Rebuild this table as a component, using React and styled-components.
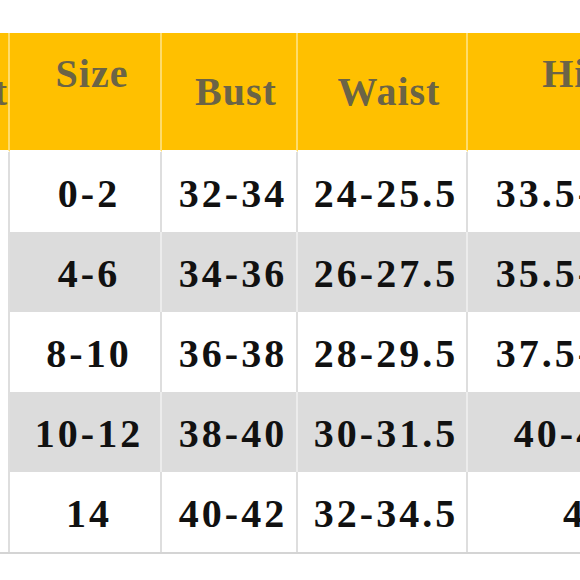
import React from "react";
import styled, { createGlobalStyle } from "styled-components";

const Global = createGlobalStyle`
  html, body { margin: 0; padding: 0; background: #ffffff; }
  body { font-family: "Liberation Serif", "Times New Roman", serif; }
`;

const Viewport = styled.div`
  width: 580px;
  height: 580px;
  overflow: hidden;
  padding-top: 33px;
  box-sizing: border-box;
  background: #ffffff;
`;

const Grid = styled.div`
  display: grid;
  grid-template-columns: 150px 152px 136px 170px 230px;
  grid-auto-rows: 80px;
  grid-template-rows: 119px;
  margin-left: -140px;
  width: max-content;
  border-bottom: 2px solid #d4d4d4;
`;

const HeadCell = styled.div`
  background: #ffc000;
  border-right: 2px solid #ffdc6a;
  border-bottom: 2px solid #ffffff;
  box-sizing: border-box;
  display: flex;
  align-items: center;
  justify-content: ${(p) => (p.$end ? "flex-end" : "center")};
  padding-left: ${(p) => p.$padL}px;
  padding-right: ${(p) => p.$padR}px;
  padding-bottom: ${(p) => (p.$raise ? "36px" : "0")};
  font-family: "Liberation Serif", "Times New Roman", serif;
  font-weight: 700;
  font-size: 40px;
  letter-spacing: 1px;
  color: #6b6446;
  white-space: nowrap;
  overflow: hidden;
`;

const Cell = styled.div`
  background: ${(p) => (p.$shade ? "#dcdcdc" : "#ffffff")};
  border-right: 2px solid ${(p) => (p.$shade ? "#ececec" : "#dedede")};
  box-sizing: border-box;
  display: flex;
  align-items: center;
  justify-content: center;
  padding-left: 8px;
  padding-top: 3px;
  font-family: "Liberation Serif", "Times New Roman", serif;
  font-weight: 700;
  font-size: 40px;
  letter-spacing: 3px;
  color: #111111;
  white-space: nowrap;
`;

const Blank = styled(Cell)`
  background: #ffffff;
  border-right-color: #dedede;
`;

const headers = [
  { label: "Height", end: true, padL: 0, padR: 0 },
  { label: "Size", raise: true, padL: 14, padR: 0 },
  { label: "Bust", padL: 14, padR: 0 },
  { label: "Waist", padL: 14, padR: 0 },
  { label: "Hip", raise: true, padL: 0, padR: 12 },
];

const rows = [
  ["0-2", "32-34", "24-25.5", "33.5-35.5"],
  ["4-6", "34-36", "26-27.5", "35.5-37.5"],
  ["8-10", "36-38", "28-29.5", "37.5-39.5"],
  ["10-12", "38-40", "30-31.5", "40-42.5"],
  ["14", "40-42", "32-34.5", "44"],
];

export default function App() {
  return (
    <>
      <Global />
      <Viewport>
        <Grid>
          {headers.map((h) => (
            <HeadCell
              key={h.label}
              $raise={h.raise}
              $end={h.end}
              $padL={h.padL}
              $padR={h.padR}
            >
              {h.label}
            </HeadCell>
          ))}
          {rows.map((r, i) => (
            <React.Fragment key={i}>
              <Blank />
              {r.map((v, j) => (
                <Cell key={j} $shade={i % 2 === 1}>
                  {v}
                </Cell>
              ))}
            </React.Fragment>
          ))}
        </Grid>
      </Viewport>
    </>
  );
}
